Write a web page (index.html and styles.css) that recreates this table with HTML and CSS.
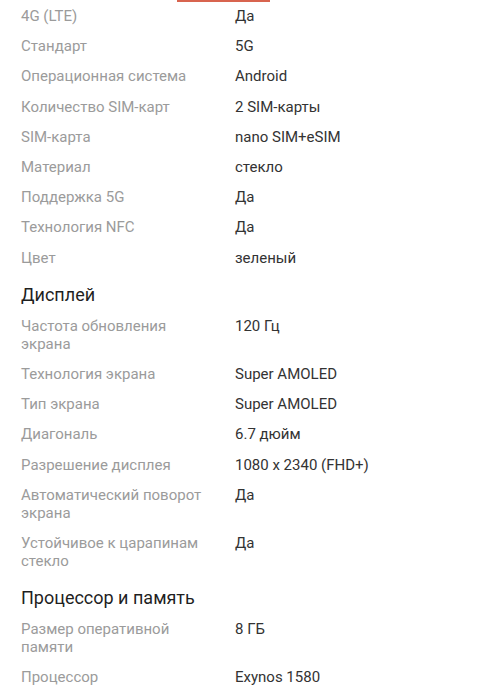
FILE: index.html
```html
<!DOCTYPE html>
<html lang="ru">
<head>
<meta charset="utf-8">
<link rel="stylesheet" href="styles.css">
</head>
<body>
<div class="tab-indicator"></div>
<div class="specs">
  <dl class="grid">
    <dt>4G (LTE)</dt><dd>Да</dd>
    <dt>Стандарт</dt><dd>5G</dd>
    <dt>Операционная система</dt><dd>Android</dd>
    <dt>Количество SIM-карт</dt><dd>2 SIM-карты</dd>
    <dt>SIM-карта</dt><dd>nano SIM+eSIM</dd>
    <dt>Материал</dt><dd>стекло</dd>
    <dt>Поддержка 5G</dt><dd>Да</dd>
    <dt>Технология NFC</dt><dd>Да</dd>
    <dt>Цвет</dt><dd>зеленый</dd>
  </dl>
  <h2 class="section">Дисплей</h2>
  <dl class="grid">
    <dt>Частота обновления экрана</dt><dd>120 Гц</dd>
    <dt>Технология экрана</dt><dd>Super AMOLED</dd>
    <dt>Тип экрана</dt><dd>Super AMOLED</dd>
    <dt>Диагональ</dt><dd>6.7 дюйм</dd>
    <dt>Разрешение дисплея</dt><dd>1080 x 2340 (FHD+)</dd>
    <dt>Автоматический поворот экрана</dt><dd>Да</dd>
    <dt>Устойчивое к царапинам стекло</dt><dd>Да</dd>
  </dl>
  <h2 class="section">Процессор и память</h2>
  <dl class="grid">
    <dt>Размер оперативной памяти</dt><dd>8 ГБ</dd>
    <dt>Процессор</dt><dd>Exynos 1580</dd>
  </dl>
</div>
</body>
</html>
```
FILE: styles.css
```css
html, body {
  margin: 0;
  padding: 0;
  background: #ffffff;
}
body {
  font-family: Roboto, "Noto Sans", sans-serif;
  position: relative;
  overflow: hidden;
  height: 699px;
}
.tab-indicator {
  position: absolute;
  top: 0;
  left: 177px;
  width: 93px;
  height: 2px;
  background: #d8644f;
}
.specs {
  padding: 1px 21px 0 21px;
}
.grid {
  margin: 0;
  display: grid;
  grid-template-columns: 182px 1fr;
  column-gap: 32px;
}
.grid dt, .grid dd {
  margin: 0;
  padding: 6.1px 0;
  font-size: 15px;
  line-height: 18px;
}
.grid dt {
  color: #9b9b9b;
}
.grid dd {
  color: #333333;
}
.section {
  margin: 0;
  padding: 10px 0 4px;
  font-size: 18px;
  line-height: 24px;
  font-weight: 400;
  color: #1f1f1f;
}
```
